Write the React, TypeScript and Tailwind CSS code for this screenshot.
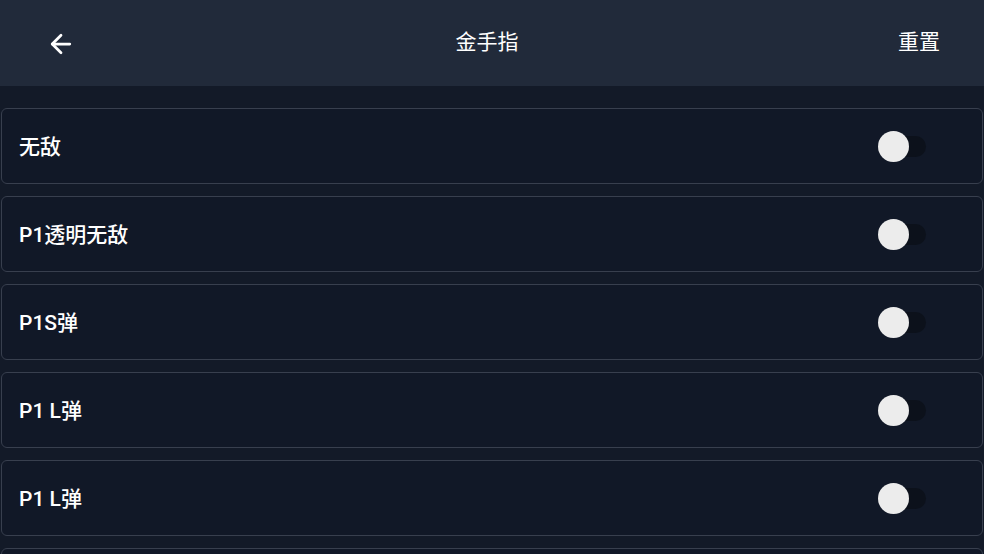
import { ArrowLeft } from "lucide-react";

const cheats = ["无敌", "P1透明无敌", "P1S弹", "P1 L弹", "P1 L弹"];

const Toggle = () => {
  return (
    <div className="relative w-[48px] h-[31px] flex items-center">
      <div className="w-[48px] h-[21px] rounded-full bg-[#0c111b]" />
      <div className="absolute left-0 top-0 w-[31px] h-[31px] rounded-full bg-[#ececec]" />
    </div>
  );
};

const App = () => {
  return (
    <div
      className="w-full h-[554px] overflow-hidden bg-[#131a28] text-white"
      style={{ fontFamily: 'Roboto, "Noto Sans CJK SC", sans-serif' }}
    >
      <header className="h-[86px] bg-[#212a3a] flex items-center justify-between pl-[46px] pr-[44px]">
        <ArrowLeft className="w-[30px] h-[30px] mt-[2px]" strokeWidth={2.2} />
        <span className="text-[21px]">金手指</span>
        <span className="text-[21px]">重置</span>
      </header>
      <main className="flex flex-col gap-[12px] px-px pt-[22px]">
        {cheats.map((name, i) => (
          <div
            key={i}
            className="h-[76px] shrink-0 flex items-center justify-between pl-[17px] pr-[56px] rounded-[6px] border border-[#383f4e] bg-[#111827]"
          >
            <span className="text-[21px] font-medium pt-[3px]">{name}</span>
            <Toggle />
          </div>
        ))}
        <div className="h-[76px] shrink-0 rounded-[6px] border border-[#383f4e] bg-[#111827]" />
      </main>
    </div>
  );
};

export default App;
